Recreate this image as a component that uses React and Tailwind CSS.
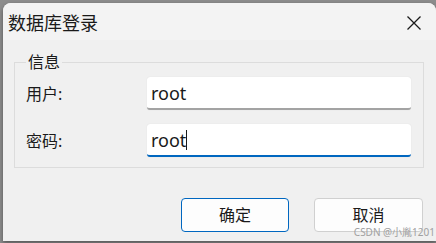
import React from 'react';

export default function App() {
    const font = { fontFamily: '"Segoe UI", "Noto Sans", "Noto Sans CJK SC", sans-serif' };
    return (
        <div className="w-[436px] h-[243px] bg-[#8c8c8c] pl-[3px] pt-[3px] overflow-hidden" style={font}>
            <div className="relative w-[433px] h-[238px] rounded-tl-[8px] rounded-tr-[8px] bg-[#f0f0f0] flex flex-col shadow-[0_2px_4px_rgba(0,0,0,0.4)]">
                <div className="h-[37px] shrink-0 flex items-center justify-between bg-[#f3f3f3] rounded-tl-[8px] rounded-tr-[8px] pl-[5px] pr-[14px] pt-[2px]">
                    <span className="text-[18px] leading-none text-[#1a1a1a]">数据库登录</span>
                    <svg width="16" height="16" viewBox="0 0 16 16" className="text-[#1a1a1a]">
                        <path d="M1.5 1.5 L14.5 14.5 M14.5 1.5 L1.5 14.5" stroke="currentColor" strokeWidth="1.3" fill="none" />
                    </svg>
                </div>

                <div className="relative mt-[22px] ml-[11px] w-[410px] h-[106px] border border-[#dcdcdc]">
                    <span className="absolute -top-[12px] left-[11px] px-[2px] bg-[#f0f0f0] text-[16px] leading-[22px] text-[#1a1a1a]">信息</span>
                    <div className="flex flex-col gap-[14px] pt-[14px] pl-[11px]">
                        <div className="flex items-center">
                            <span className="w-[121px] text-[16px] text-[#1a1a1a]">用户:</span>
                            <div className="w-[264px] h-[33px] bg-white border-b-[2px] border-[#a3a3a3] rounded-[3px] shadow-[0_0_1px_rgba(0,0,0,0.15)] flex items-center pl-[4px]">
                                <span className="text-[18px] leading-none text-[#1a1a1a]">root</span>
                            </div>
                        </div>
                        <div className="flex items-center">
                            <span className="w-[121px] text-[16px] text-[#1a1a1a]">密码:</span>
                            <div className="w-[264px] h-[33px] bg-white border-b-[2px] border-[#0067c0] rounded-[3px] shadow-[0_0_1px_rgba(0,0,0,0.15)] flex items-center pl-[4px]">
                                <span className="text-[18px] leading-none text-[#1a1a1a]">root</span>
                                <span className="w-[1px] h-[20px] bg-[#1a1a1a]"></span>
                            </div>
                        </div>
                    </div>
                </div>

                <div className="flex gap-[25px] ml-[178px] mt-[30px]">
                    <div className="w-[108px] h-[34px] rounded-[4px] border border-[#0067c0] bg-[#fdfdfd] flex items-center justify-center text-[16px] text-[#1a1a1a]">确定</div>
                    <div className="w-[109px] h-[34px] rounded-[4px] border border-[#d0d0d0] bg-[#fdfdfd] flex items-center justify-center text-[16px] text-[#1a1a1a]">取消</div>
                </div>

                <span className="absolute right-[1px] bottom-[4px] text-[10px] leading-none text-[#a0a0a0]">CSDN @小胤1201</span>
            </div>
        </div>
    );
}
